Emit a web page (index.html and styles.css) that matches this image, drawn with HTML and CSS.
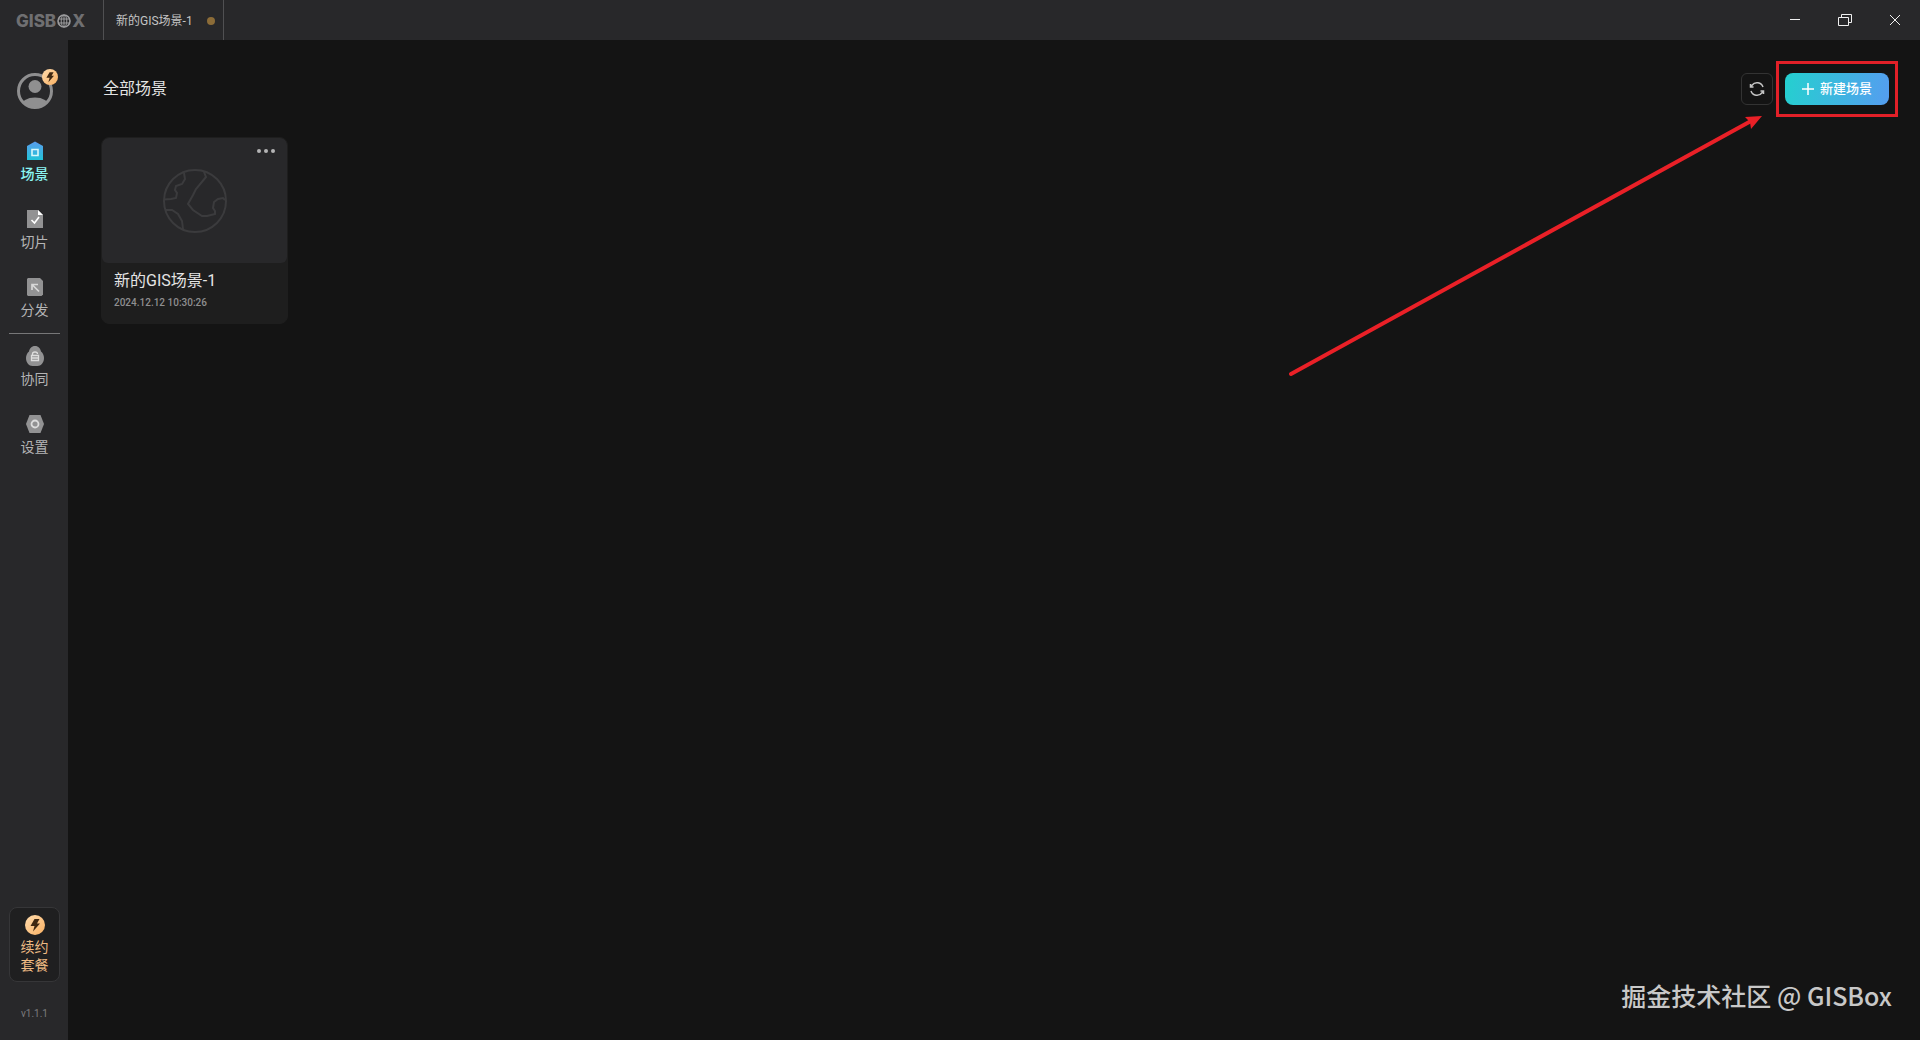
FILE: index.html
```html
<!DOCTYPE html>
<html lang="zh-CN">
<head>
    <meta charset="UTF-8">
    <meta name="viewport" content="width=device-width, initial-scale=1.0">
    <title>GISBox</title>
    <link rel="stylesheet" href="styles.css">
</head>
<body>
    <header class="titlebar">
        <div class="logo">
            <span>GISB</span>
            <svg width="14" height="14" viewBox="0 0 14 14" fill="none" stroke="currentColor">
                <circle cx="7" cy="7" r="6" stroke-width="1.6"/>
                <ellipse cx="7" cy="7" rx="2.8" ry="6"/>
                <path d="M7 1v12M1 5h12M1 9h12"/>
            </svg>
            <span>X</span>
        </div>
        <button class="tab">新的GIS场景-1<span class="tab-dot"></span></button>
        <div class="window-buttons">
            <button aria-label="最小化">
                <svg width="16" height="16" viewBox="0 0 16 16"><path d="M3 7.5h10"/></svg>
            </button>
            <button aria-label="还原">
                <svg width="16" height="16" viewBox="0 0 16 16"><path d="M1.5 5.5h10v8h-10zM4.5 5.5v-3h10v8h-3"/></svg>
            </button>
            <button aria-label="关闭">
                <svg width="16" height="16" viewBox="0 0 16 16"><path d="M3 3l10 10M13 3L3 13"/></svg>
            </button>
        </div>
    </header>

    <div class="layout">
        <aside class="sidebar">
            <button class="avatar" aria-label="用户">
                <svg width="36" height="36" viewBox="0 0 36 36">
                    <defs>
                        <clipPath id="avatarClip"><circle cx="18" cy="18" r="17"/></clipPath>
                    </defs>
                    <circle cx="18" cy="18" r="16.5" fill="none" stroke="#8f8f90" stroke-width="3"/>
                    <circle cx="18" cy="13.5" r="6.5" fill="#8f8f90"/>
                    <ellipse cx="18" cy="33" rx="14" ry="8.5" fill="#8f8f90" clip-path="url(#avatarClip)"/>
                </svg>
                <svg class="avatar-badge" width="16" height="16" viewBox="0 0 20 20">
                    <circle cx="10" cy="10" r="10" fill="url(#gold)"/>
                    <path d="M9.5 4h5l-2.5 4.5h3L8 16.5l1.5-5.5H5.5z" fill="#3f2812"/>
                </svg>
            </button>

            <nav class="nav">
                <a href="#" class="nav-item active">
                    <svg width="20" height="20" viewBox="0 0 20 20">
                        <defs>
                            <linearGradient id="home" x1="0" y1="0" x2="0" y2="1">
                                <stop offset="0" stop-color="#5a9cec"/>
                                <stop offset="1" stop-color="#22c3d8"/>
                            </linearGradient>
                        </defs>
                        <path d="M10 .5L18 5v14H2V5z" fill="url(#home)"/>
                        <path d="M7 8.5h6v6H7z" fill="none" stroke="#d9f8fb" stroke-width="1.6"/>
                    </svg>
                    <span>场景</span>
                </a>
                <a href="#" class="nav-item">
                    <svg width="20" height="20" viewBox="0 0 20 20">
                        <path d="M2 1h11l5 5v13H2z" fill="#929293"/>
                        <path d="M13 1l5 5h-5z" fill="#fff"/>
                        <path d="M6.5 11l3 3 4.5-6" fill="none" stroke="#fff" stroke-width="1.6"/>
                    </svg>
                    <span>切片</span>
                </a>
                <a href="#" class="nav-item">
                    <svg width="20" height="20" viewBox="0 0 20 20">
                        <path d="M3 1h12l3 3v13.5L16.5 19H3l-1-1V2z" fill="#929293"/>
                        <path d="M7 13V7.5h6M7.5 8l6.5 6.5" fill="none" stroke="#d8d8d8" stroke-width="1.7"/>
                    </svg>
                    <span>分发</span>
                </a>
            </nav>
            <nav class="nav nav-second">
                <a href="#" class="nav-item">
                    <svg width="20" height="20" viewBox="0 0 20 20">
                        <path d="M10 0c3.500 0 5.500 2.500 6 5.500 2 1.500 3 4 3 6.500 0 4.500-3 8-6.500 8h-5C4 20 1 16.500 1 12c0-2.500 1-5 3-6.500C4.500 2.500 6.500 0 10 0z" fill="#929293"/>
                        <path d="M6.500 9.500h7v5h-7zM7.500 9V8q0-2 2.500-2t2.500 2M6.500 12h7" fill="none" stroke="#ddd" stroke-width="1.3"/>
                    </svg>
                    <span>协同</span>
                </a>
                <a href="#" class="nav-item">
                    <svg width="20" height="20" viewBox="0 0 20 20">
                        <path d="M4.500 1h11L19 10l-3.500 9h-11L1 10z" fill="#929293"/>
                        <circle cx="10" cy="10" r="3.5" fill="none" stroke="#ddd" stroke-width="1.8"/>
                    </svg>
                    <span>设置</span>
                </a>
            </nav>

            <button class="renew">
                <svg width="20" height="20" viewBox="0 0 20 20">
                    <defs>
                        <linearGradient id="gold" x1="0" y1="0" x2="1" y2="1">
                            <stop offset="0" stop-color="#ffdcae"/>
                            <stop offset="1" stop-color="#f9b062"/>
                        </linearGradient>
                    </defs>
                    <circle cx="10" cy="10" r="10" fill="url(#gold)"/>
                    <path d="M9.5 4h5l-2.5 4.5h3L8 16.5l1.5-5.5H5.5z" fill="#3f2812"/>
                </svg>
                <span>续约<br>套餐</span>
            </button>
            <div class="version">v1.1.1</div>
        </aside>

        <main class="main">
            <div class="toolbar">
                <h1>全部场景</h1>
                <button class="refresh" aria-label="刷新">
                    <svg width="16" height="16" viewBox="0 0 16 16" fill="none" stroke="#c4c4c4" stroke-width="1.5">
                        <path d="M14 6A6.3 6.3 0 0 0 3 4.2L1.5 6M1.5 3v3h3"/>
                        <path d="M2 10a6.3 6.3 0 0 0 11 1.8L14.5 10M14.5 13v-3h-3"/>
                    </svg>
                </button>
                <div class="create-wrap">
                    <button class="create">
                        <svg width="12" height="12" viewBox="0 0 12 12"><path d="M6 0v12M0 6h12" stroke="#fff" stroke-width="1.5"/></svg>
                        新建场景
                    </button>
                </div>
            </div>

            <div class="scene-grid">
                <article class="scene-card">
                    <div class="scene-thumb">
                        <svg width="64" height="64" viewBox="0 0 64 64" fill="none" stroke="#3b3b3d" stroke-width="2">
                            <circle cx="32" cy="32" r="31"/>
                            <path d="M21 4l1 6-3 5-6 2-1 4 2 3-1 5-5 1-7 .5"/>
                            <path d="M41 3l2 5-10 12-3 6-5 9 5 6 9 6h5l8-2v-3l-2-3 1-6 4-3 5-1 2 2"/>
                            <path d="M3 41h6l6 4 4 7 1 8"/>
                        </svg>
                        <button class="more" aria-label="更多"><i></i><i></i><i></i></button>
                    </div>
                    <div class="scene-info">
                        <h2>新的GIS场景-1</h2>
                        <time>2024.12.12 10:30:26</time>
                    </div>
                </article>
            </div>

            <svg class="arrow" width="480" height="268" viewBox="0 0 480 268">
                <path d="M5 262L465 9" stroke="#ea2027" stroke-width="4" stroke-linecap="round"/>
                <path d="M476 4L459 5l5 5 1 7z" fill="#ea2027"/>
            </svg>
            <div class="watermark">掘金技术社区 @ GISBox</div>
        </main>
    </div>
</body>
</html>
```
FILE: styles.css
```css
* {
    box-sizing: border-box;
}

body {
    margin: 0;
    min-height: 100vh;
    display: flex;
    flex-direction: column;
    background: #141414;
    color: #e4e4e4;
    font-family: Roboto, "Noto Sans CJK SC", sans-serif;
    line-height: 20px;
}

button {
    border: none;
    padding: 0;
    background: none;
    color: inherit;
    font: inherit;
    cursor: pointer;
}

svg {
    display: block;
    flex-shrink: 0;
}

h1,
h2 {
    margin: 0;
    font-weight: normal;
}

/* title bar */
.titlebar {
    display: flex;
    height: 40px;
    background: #28282a;
}

.logo {
    display: flex;
    align-items: center;
    gap: 1px;
    width: 103px;
    padding: 2px 0 0 16px;
    color: #6f6f71;
    font: 800 17px Inter, sans-serif;
}

.logo svg {
    color: #9c9c9e;
}

.tab {
    display: flex;
    align-items: center;
    justify-content: space-between;
    width: 121px;
    padding: 2px 8px 0 12px;
    border: solid #505052;
    border-width: 0 1px;
    color: #c4c4c4;
    font-size: 12px;
}

.tab-dot {
    width: 8px;
    height: 8px;
    border-radius: 50%;
    background: #8c6c38;
}

.window-buttons {
    display: flex;
    margin-left: auto;
}

.window-buttons button {
    display: grid;
    place-items: center;
    width: 50px;
}

.window-buttons svg {
    fill: none;
    stroke: #f0f0f0;
}

.layout {
    flex: 1;
    display: flex;
}

/* sidebar */
.sidebar {
    display: flex;
    flex-direction: column;
    width: 68px;
    padding: 33px 8px 16px 9px;
    background: #28282a;
}

.avatar {
    position: relative;
    align-self: center;
    margin-bottom: 32px;
}

.avatar-badge {
    position: absolute;
    top: -4px;
    right: -5px;
}

.nav {
    display: flex;
    flex-direction: column;
    gap: 25px;
}

.nav-second {
    margin-top: 13px;
    padding-top: 12px;
    border-top: 1px solid #777778;
}

.nav-item {
    display: flex;
    flex-direction: column;
    align-items: center;
    gap: 3px;
    color: #b4b4b5;
    font-size: 14px;
    text-decoration: none;
}

.nav-item.active {
    color: #8af4f2;
    font-weight: 500;
}

.renew {
    display: flex;
    flex-direction: column;
    align-items: center;
    gap: 3px;
    margin-top: auto;
    padding: 7px 0;
    border: 1px solid #363638;
    border-radius: 8px;
    background: #1f1f20;
    color: #eebb84;
    font-size: 14px;
    line-height: 18px;
}

.version {
    margin-top: 22px;
    color: #7c7c7e;
    font-size: 10px;
    text-align: center;
}

/* scene list */
.main {
    position: relative;
    flex: 1;
    padding: 33px 31px 33px 33px;
}

.toolbar {
    display: flex;
    align-items: center;
    gap: 12px;
    height: 32px;
    margin-bottom: 32px;
}

.toolbar h1 {
    flex: 1;
    padding-left: 2px;
    font-size: 16px;
}

.refresh {
    display: grid;
    place-items: center;
    width: 32px;
    height: 32px;
    border: 1px solid #333;
    border-radius: 6px;
}

.create-wrap {
    margin: 0 -9px;
    padding: 9px 6px;
    border: 3px solid #e22028;
}

.create {
    display: flex;
    align-items: center;
    justify-content: center;
    gap: 6px;
    width: 104px;
    height: 32px;
    border-radius: 8px;
    background: linear-gradient(100deg, #24d0cf, #559df0);
    color: #fff;
    font-size: 13px;
    font-weight: 500;
}

.scene-grid {
    display: grid;
    grid-template-columns: repeat(auto-fill, 187px);
    gap: 24px;
}

.scene-card {
    overflow: hidden;
    border: 1px solid #1e1e1e;
    border-radius: 8px;
    background: #1e1e1e;
}

.scene-thumb {
    position: relative;
    display: grid;
    place-items: center;
    height: 125px;
    border-radius: 6px;
    background: #28282a;
}

.more {
    position: absolute;
    top: 11px;
    right: 12px;
    display: flex;
    gap: 3px;
}

.more i {
    width: 4px;
    height: 4px;
    border-radius: 50%;
    background: #b4b4b5;
}

.scene-info {
    padding: 6px 12px 10px;
}

.scene-info h2 {
    font-size: 16px;
    line-height: 24px;
}

.scene-info time {
    display: block;
    color: #8f8f90;
    font-size: 10px;
    font-weight: 500;
}

.arrow {
    position: absolute;
    top: 72px;
    right: 154px;
    pointer-events: none;
}

.watermark {
    position: absolute;
    right: 28px;
    bottom: 27px;
    color: #c8c8c8;
    font: 500 25px/36px "Noto Sans CJK SC", sans-serif;
}
```
